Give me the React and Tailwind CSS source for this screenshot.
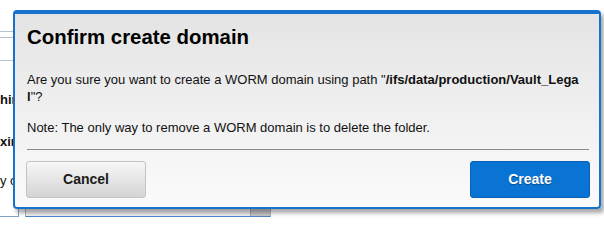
import React from "react";

const font = { fontFamily: '"Liberation Sans", Arial, sans-serif' };

const App = () => {
  return (
    <div className="relative w-[604px] h-[229px] bg-white overflow-hidden text-[#111]" style={font}>
      {/* Background form (mostly hidden behind the dialog) */}
      <div className="flex flex-col w-[300px]">
        <div className="h-[31px]" />
        <div className="h-px w-[30px] bg-[#b6c3d3]" />
        <div className="h-[5px]" />
        <div className="h-px w-[30px] bg-[#b6c3d3]" />
        <div className="h-[22px]" />
        <div className="h-px w-[30px] bg-[#b6c3d3]" />
        <div className="h-[31px]" />
        <div className="text-[13px] font-bold leading-[15px] whitespace-nowrap">hin</div>
        <div className="h-[27px]" />
        <div className="text-[13px] font-bold leading-[15px] whitespace-nowrap">xin</div>
        <div className="h-[24px]" />
        <div className="text-[13px] leading-[15px] whitespace-nowrap">y c</div>
        <div className="flex h-[29px]">
          <div className="w-[19px] h-full border-r border-b border-[#7f9fc6]" />
          <div className="w-[6px]" />
          <div className="flex w-[246px] h-full border-x border-b border-x-[#a9b7c8] border-b-[#4f86c6] bg-[#f2f2f2]">
            <div className="flex-1" />
            <div className="w-[20px] border-l border-[#a9a9a9] bg-[#c9c9c9]" />
          </div>
        </div>
      </div>

      {/* Dialog */}
      <div className="absolute left-[13px] top-[10px] w-[588px] h-[199px] flex flex-col border-2 border-t-4 border-[#1672cd] rounded-[4px] bg-gradient-to-b from-[#e4e4e4] to-[#fbfbfb] shadow-[3px_4px_4px_rgba(0,0,0,0.35)]">
        <div className="px-[12px] pt-[12px]">
          <h1 className="text-[20.4px] font-bold leading-[23px] text-black">Confirm create domain</h1>
        </div>
        <div className="px-[12px] pt-[22px] text-[13px] leading-[17px] text-[#111]">
          <p className="whitespace-nowrap">
            Are you sure you want to create a WORM domain using path "<b>/ifs/data/production/Vault_Lega</b>
          </p>
          <p className="whitespace-nowrap">
            <b>l</b>"?
          </p>
          <p className="mt-[14px] whitespace-nowrap">Note: The only way to remove a WORM domain is to delete the folder.</p>
        </div>
        <div className="ml-[12px] mr-[10px] mt-[13px] h-px bg-[#8a8a8a]" />
        <div className="flex justify-between pl-[11px] pr-[9px] pt-[11px]">
          <button className="w-[120px] h-[37px] rounded-[3px] border border-[#c4c4c4] bg-gradient-to-b from-[#f7f7f7] to-[#d4d4d4] text-[14px] font-bold text-[#1a1a1a]">
            Cancel
          </button>
          <button className="w-[120px] h-[37px] rounded-[3px] border border-[#0a62b8] bg-[#0a74d4] text-[14px] font-bold text-white [text-shadow:0_1px_1px_rgba(0,0,0,0.35)]">
            Create
          </button>
        </div>
      </div>
    </div>
  );
};

export default App;
